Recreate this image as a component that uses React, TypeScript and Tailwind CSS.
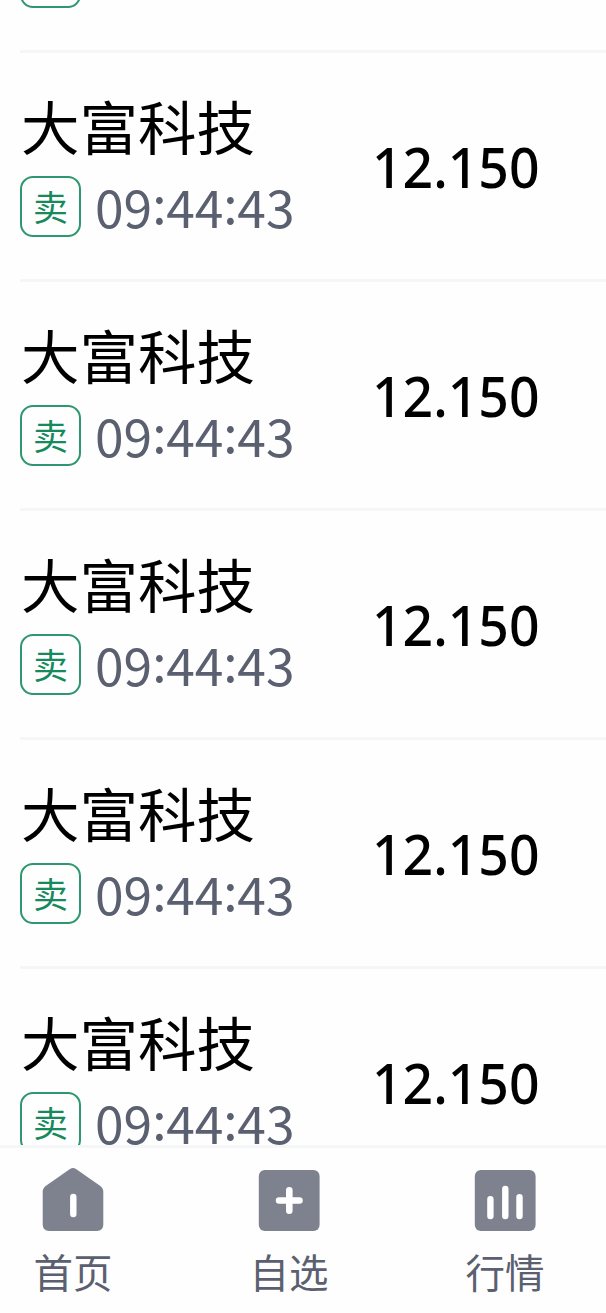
import type { ReactNode } from 'react';

type Trade = { id: number; name: string; side: string; time: string; price: string };

const trades: Trade[] = [1, 2, 3, 4, 5].map((id) => ({
  id,
  name: '大富科技',
  side: '卖',
  time: '09:44:43',
  price: '12.150',
}));

function TradeTime({ value }: { value: string }) {
  const parts = value.split(':');
  return (
    <span className="ml-[14px] flex h-[61px] items-center pb-[2px] text-[51.5px] leading-none text-[#5b6070]">
      {parts.map((part, i) => (
        <span key={i} className="flex">
          {i > 0 && <span className="w-[14px] -translate-y-[4px] text-center">:</span>}
          <span>{part}</span>
        </span>
      ))}
    </span>
  );
}

function TradeRow({ trade }: { trade: Trade }) {
  return (
    <li className="ml-5 flex h-[229px] shrink-0 border-t-3 border-[#f5f6f7]">
      <div className="flex w-[352px] flex-col pt-[39px]">
        <div className="h-[84px] pl-px text-[58.5px] leading-[66px] text-black">{trade.name}</div>
        <div className="flex">
          <span className="flex size-[61px] shrink-0 items-center justify-center rounded-[13px] border-2 border-[#2f976f] pb-[3px] text-[35px] leading-none text-[#168a5c]">
            {trade.side}
          </span>
          <TradeTime value={trade.time} />
        </div>
      </div>
      <div className="origin-left scale-x-[0.955] pt-[75px] font-['Noto_Sans'] text-[56px] leading-[76px] font-medium text-black">
        {trade.price}
      </div>
    </li>
  );
}

function NavItem({ label, children }: { label: string; children: ReactNode }) {
  return (
    <a className="flex w-[216px] shrink-0 flex-col items-center pt-[19px]">
      <svg width="62" height="64" viewBox="0 0 62 64" fill="none" className="shrink-0">
        {children}
      </svg>
      <span className="mt-[12px] text-[39.5px] leading-[56px] text-[#5b6070]">{label}</span>
    </a>
  );
}

export default function App() {
  return (
    <div className="flex h-[1313px] w-[606px] flex-col overflow-hidden bg-[#fefefe] font-['Noto_Sans_CJK_SC',sans-serif]">
      <main className="flex h-[1145px] shrink-0 flex-col overflow-hidden">
        <div className="flex h-[50px] shrink-0 items-start pl-5">
          <span className="-mt-[53px] h-[61px] w-[61px] rounded-[13px] border-2 border-[#2f976f]" />
        </div>
        <ul className="flex flex-col">
          {trades.map((trade) => (
            <TradeRow key={trade.id} trade={trade} />
          ))}
        </ul>
      </main>
      <nav className="-ml-[35px] flex h-[168px] w-[677px] shrink-0 border-t-3 border-[#f4f6f7]">
        <NavItem label="首页">
          <path
            d="M28 2.1Q31 .1 34 2.1L58 18.8Q61.3 21.1 61.3 24.8V57.5Q61.3 64 54.8 64H7.2Q.7 64 .7 57.5V24.8Q.7 21.1 4 18.8Z"
            fill="#7e828f"
          />
          <path d="M31.3 30V47" stroke="#fff" strokeWidth="6.4" strokeLinecap="round" />
        </NavItem>
        <NavItem label="自选">
          <rect x=".8" y="3" width="60.8" height="61" rx="6" fill="#7e828f" />
          <path d="M31.3 23.3V43.7M21.1 33.5H41.5" stroke="#fff" strokeWidth="6.6" strokeLinecap="round" />
        </NavItem>
        <NavItem label="行情">
          <rect x=".8" y="3" width="60.8" height="61" rx="6" fill="#7e828f" />
          <path d="M16.4 32.2V49M31.3 22V49M45.5 30.3V49" stroke="#fff" strokeWidth="6.4" strokeLinecap="round" />
        </NavItem>
      </nav>
    </div>
  );
}
